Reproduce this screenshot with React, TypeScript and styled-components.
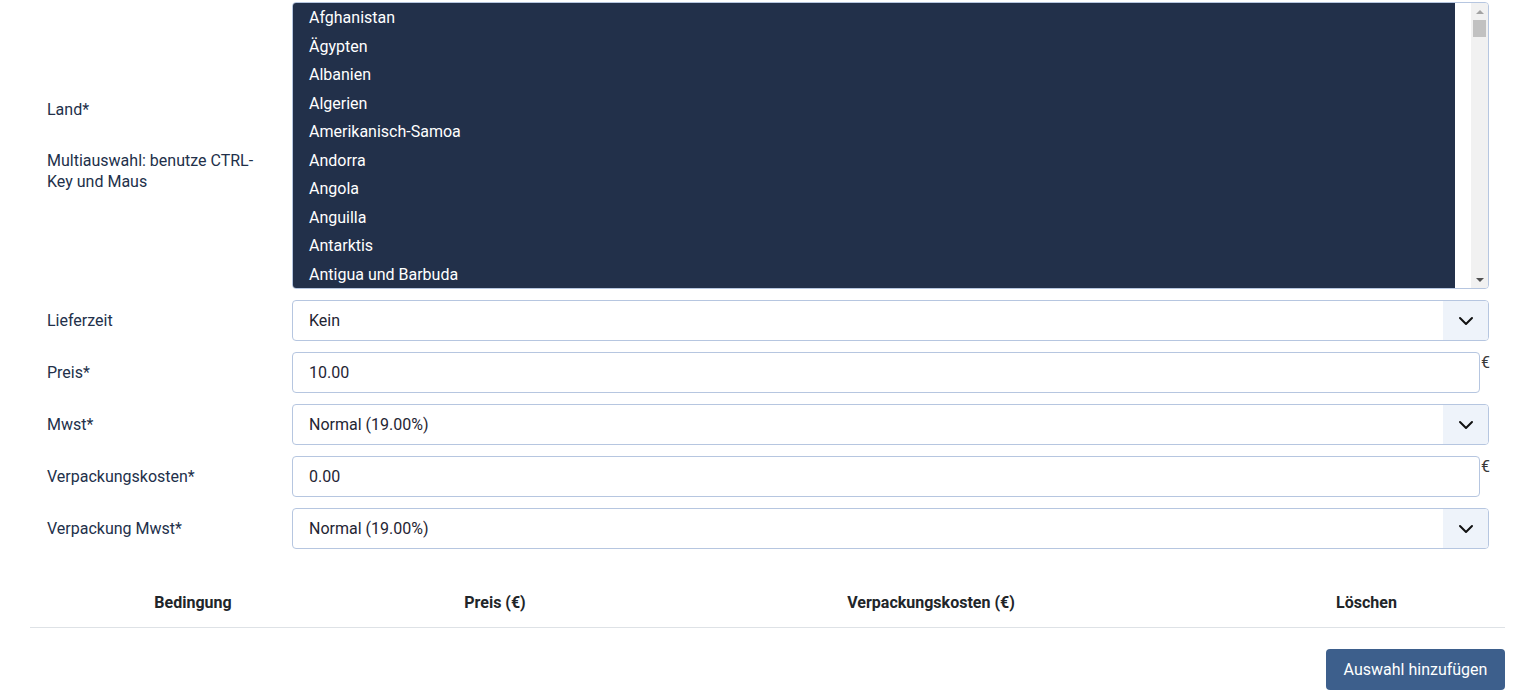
import React from 'react';
import styled, { createGlobalStyle } from 'styled-components';

const countries = [
    'Afghanistan',
    'Ägypten',
    'Albanien',
    'Algerien',
    'Amerikanisch-Samoa',
    'Andorra',
    'Angola',
    'Anguilla',
    'Antarktis',
    'Antigua und Barbuda',
];

type FieldDef = { label: string; kind: 'select' | 'input'; value: string };

const fields: Array<FieldDef> = [
    { label: 'Lieferzeit', kind: 'select', value: 'Kein' },
    { label: 'Preis*', kind: 'input', value: '10.00' },
    { label: 'Mwst*', kind: 'select', value: 'Normal (19.00%)' },
    { label: 'Verpackungskosten*', kind: 'input', value: '0.00' },
    { label: 'Verpackung Mwst*', kind: 'select', value: 'Normal (19.00%)' },
];

const columns = ['Bedingung', 'Preis (€)', 'Verpackungskosten (€)', 'Löschen'];

function Chevron() {
    return (
        <svg width="16" height="16" viewBox="0 0 16 16" fill="none">
            <path d="M2 5l6 6 6-6" stroke="#111" strokeWidth="2" strokeLinecap="round" strokeLinejoin="round" />
        </svg>
    );
}

export default function App() {
    return (<>
        <GlobalStyle />
        <Page>
            <FormGrid>
                <Label>
                    <span>Land*</span>
                    <Help>Multiauswahl: benutze CTRL-Key und Maus</Help>
                </Label>
                <ListBox>
                    <Options>
                        { countries.map((c) => <Option key={c}>{c}</Option>) }
                    </Options>
                    <Gutter />
                    <Scrollbar>
                        <Arrow up />
                        <Thumb />
                        <Track />
                        <Arrow />
                    </Scrollbar>
                </ListBox>

                { fields.map((f) => (
                    <React.Fragment key={f.label}>
                        <Label>{f.label}</Label>
                        { f.kind === 'select'
                            ? <SelectBox>
                                <SelectValue>{f.value}</SelectValue>
                                <Toggle><Chevron /></Toggle>
                            </SelectBox>
                            : <InputRow>
                                <TextInput defaultValue={f.value} />
                                <Currency>€</Currency>
                            </InputRow>
                        }
                    </React.Fragment>
                ))}
            </FormGrid>

            <TableHead>
                { columns.map((c) => <HeadCell key={c}>{c}</HeadCell>) }
            </TableHead>

            <Actions>
                <AddButton>Auswahl hinzufügen</AddButton>
            </Actions>
        </Page>
    </>);
}

const GlobalStyle = createGlobalStyle`
    body {
        margin: 0;
        background: #fff;
        font-family: Roboto, "Liberation Sans", sans-serif;
        font-size: 16px;
        color: #22304a;
    }
`;

const Page = styled.div`
    width: 1475px;
    margin-left: 30px;
    padding-top: 2px;
`;

const FormGrid = styled.div`
    display: grid;
    grid-template-columns: 262px 1197px;
    row-gap: 11px;
`;

const Label = styled.div`
    display: flex;
    flex-direction: column;
    justify-content: center;
    padding-left: 17px;
    padding-right: 20px;
    line-height: 21px;
    color: #22304a;
`;

const Help = styled.span`
    margin-top: 30px;
`;

const ListBox = styled.div`
    display: flex;
    height: 287px;
    border: 1px solid #b6c6e0;
    border-radius: 4px;
    overflow: hidden;
    box-sizing: border-box;
`;

const Options = styled.div`
    flex: 1;
    padding-top: 1px;
    background: #22304a;
`;

const Option = styled.div`
    height: 28.5px;
    line-height: 28.5px;
    padding-left: 16px;
    color: #fff;
`;

const Gutter = styled.div`
    width: 16px;
    background: #fff;
`;

const Scrollbar = styled.div`
    width: 17px;
    display: flex;
    flex-direction: column;
    background: #f1f1f1;
`;

const Arrow = styled.div<{ up?: boolean }>`
    height: 17px;
    display: flex;
    align-items: center;
    justify-content: center;
    &::after {
        content: '';
        border-left: 4px solid transparent;
        border-right: 4px solid transparent;
        ${props => props.up ? 'border-bottom: 4px solid #a3a3a3;' : 'border-top: 4px solid #505050;'}
    }
`;

const Thumb = styled.div`
    height: 17px;
    margin: 0 2px;
    background: #c1c1c1;
`;

const Track = styled.div`
    flex: 1;
`;

const SelectBox = styled.div`
    display: flex;
    height: 41px;
    box-sizing: border-box;
    border: 1px solid #b6c6e0;
    border-radius: 4px;
    overflow: hidden;
`;

const SelectValue = styled.div`
    flex: 1;
    display: flex;
    align-items: center;
    padding-left: 16px;
    color: #1f2533;
`;

const Toggle = styled.div`
    width: 45px;
    display: flex;
    align-items: center;
    justify-content: center;
    background: #eef3fa;
`;

const InputRow = styled.div`
    display: flex;
    align-items: flex-start;
`;

const TextInput = styled.input`
    flex-shrink: 0;
    width: 1188px;
    height: 41px;
    box-sizing: border-box;
    border: 1px solid #b6c6e0;
    border-radius: 4px;
    padding: 0 16px;
    font: inherit;
    color: #1f2533;
    outline: none;
`;

const Currency = styled.span`
    flex-shrink: 0;
    margin-left: 1px;
    line-height: 21px;
    font-size: 16px;
    color: #3a3a3a;
`;

const TableHead = styled.div`
    display: grid;
    grid-template-columns: 326px 278px 594px 277px;
    margin-top: 41px;
    border-bottom: 1px solid #dee2e6;
`;

const HeadCell = styled.div`
    text-align: center;
    font-weight: 700;
    color: #212529;
    line-height: 21px;
    padding: 2px 0 14px;
`;

const Actions = styled.div`
    display: flex;
    justify-content: flex-end;
    margin-top: 21px;
`;

const AddButton = styled.button`
    width: 179px;
    height: 41px;
    border: none;
    border-radius: 4px;
    background: #3d5f8c;
    color: #fff;
    font: inherit;
    cursor: pointer;
`;
